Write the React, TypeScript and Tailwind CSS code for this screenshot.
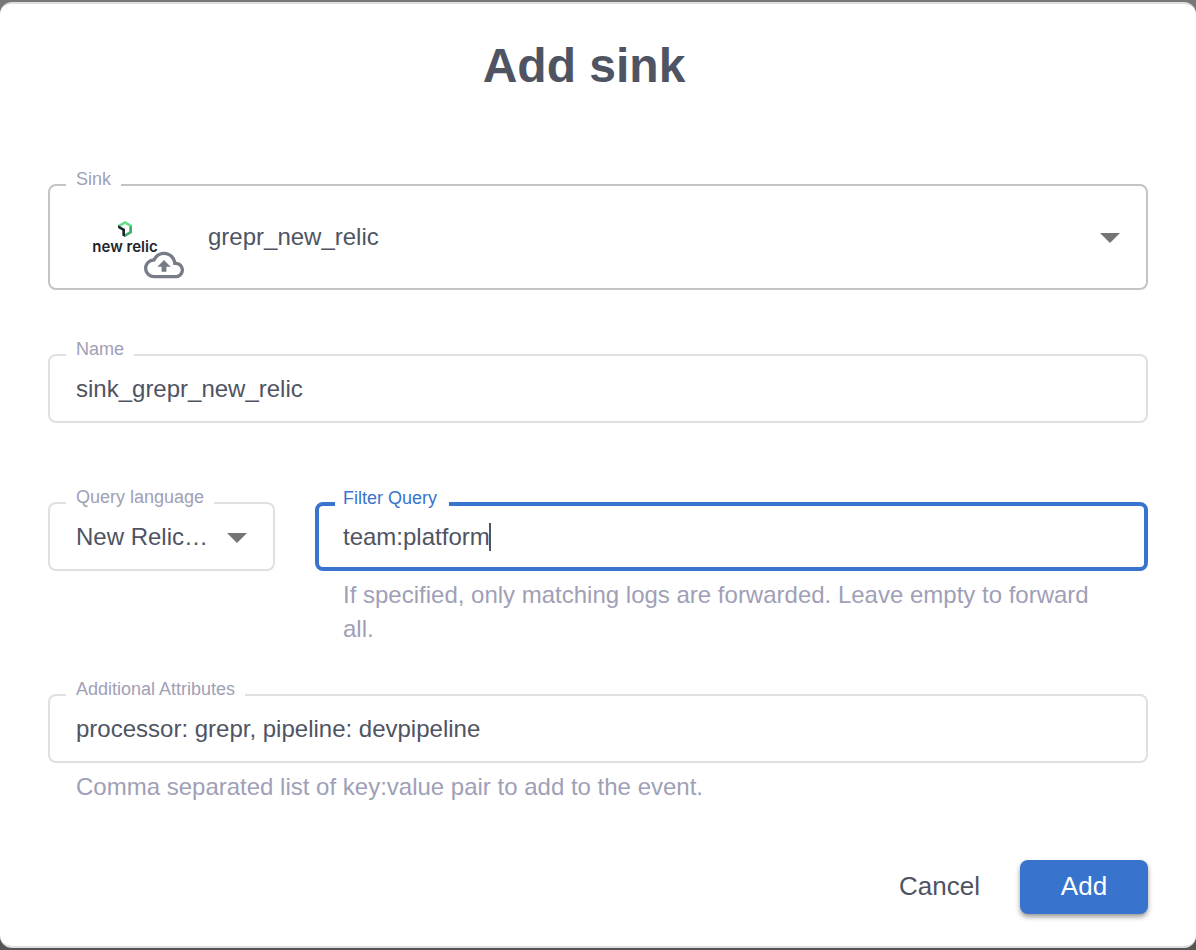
import { useState } from "react";
import type { ReactNode } from "react";
import clsx from "clsx";

type FieldProps = {
  id: string;
  label: string;
  tone?: "default" | "strong" | "focused";
  children: ReactNode;
};

// Outlined box with the label sitting in the notch of the top border
function Field({ id, label, tone = "default", children }: FieldProps) {
  return (
    <fieldset
      className={clsx(
        "min-w-0 rounded-lg",
        tone === "default" && "border-2 border-[#e0e0e0]",
        tone === "strong" && "border-2 border-[#c4c4c4]",
        tone === "focused" && "border-4 border-[#3873cd]"
      )}
    >
      <legend
        className={clsx(
          "ml-4 flex items-end text-lg",
          tone === "focused"
            ? "h-1 pl-2 pr-3 leading-4 text-[#3873cd]"
            : "h-0.5 px-2.5 leading-[14px] text-[#9fa0b6]"
        )}
      >
        <label htmlFor={id}>{label}</label>
      </legend>
      {children}
    </fieldset>
  );
}

function Arrow() {
  return (
    <svg viewBox="0 0 24 24" className="pointer-events-none absolute right-3 size-12 fill-[#757575]">
      <path d="M7 10l5 5 5-5z" />
    </svg>
  );
}

function NewRelicLogo() {
  return (
    <div className="pointer-events-none absolute left-[41px] flex w-17 flex-col items-center pt-1">
      <svg viewBox="0 0 832.8 959.8" className="h-4 w-3.5">
        <polygon fill="#3fae6a" points="672.6,332.3 672.6,627.4 416.4,775.2 416.4,959.8 832.8,719.9 832.8,239.9" />
        <polygon fill="#62df8a" points="416.4,184.6 672.6,332.3 832.8,239.9 416.4,0 0,239.9 160.1,332.3" />
        <polygon fill="#1d252c" points="256.2,572.3 256.2,867.6 416.4,959.8 416.4,479.9 0,239.9 0,424.5" />
      </svg>
      <span className="whitespace-nowrap font-[family-name:Inter,sans-serif] text-[15px]/5 font-semibold text-[#1d252c]">
        new relic
      </span>
      <svg viewBox="0 0 24 24" className="absolute left-[53px] top-7 size-10 fill-[#777b87]">
        <path d="M19.35 10.04C18.67 6.59 15.64 4 12 4 9.11 4 6.6 5.64 5.35 8.04 2.34 8.36 0 10.91 0 14c0 3.31 2.69 6 6 6h13c2.76 0 5-2.24 5-5 0-2.64-2.05-4.78-4.65-4.96zM19 18H6c-2.21 0-4-1.79-4-4 0-2.05 1.53-3.76 3.56-3.97l1.07-.11.5-.95C8.08 7.14 9.94 6 12 6c2.62 0 4.88 1.86 5.39 4.43l.3 1.5 1.53.11c1.56.1 2.78 1.41 2.78 2.96 0 1.65-1.35 3-3 3zM8 13h2.55v3h2.9v-3H16l-4-4z" />
      </svg>
    </div>
  );
}

export default function App() {
  const [name, setName] = useState("sink_grepr_new_relic");
  const [query, setQuery] = useState("team:platform");
  const [attributes, setAttributes] = useState("processor: grepr, pipeline: devpipeline");

  return (
    <div className="min-h-screen bg-gradient-to-b from-[#777777] to-[#555555] py-0.5 font-['Liberation_Sans',Arial,sans-serif] text-[#4f5463]">
      <form
        role="dialog"
        aria-labelledby="dialog-title"
        onSubmit={(e) => e.preventDefault()}
        className="rounded-xl border-y-2 border-[#dedede] bg-white px-12 pb-8 pt-8"
      >
        <h1 id="dialog-title" className="mr-7 text-center text-5xl/15 font-bold">
          Add sink
        </h1>

        <div className="mt-22">
          <Field id="sink" label="Sink" tone="strong">
            <div className="relative flex items-center">
              <NewRelicLogo />
              <select
                id="sink"
                className="h-[102px] w-full appearance-none bg-transparent pl-[158px] pr-14 text-2xl outline-none"
              >
                <option>grepr_new_relic</option>
              </select>
              <Arrow />
            </div>
          </Field>
        </div>

        <div className="mt-16">
          <Field id="name" label="Name">
            <input
              id="name"
              value={name}
              onChange={(e) => setName(e.target.value)}
              className="block h-[65px] w-full px-[26px] text-2xl outline-none"
            />
          </Field>
        </div>

        <div className="mt-[79px] flex items-start gap-10">
          <div className="w-[227px] shrink-0">
            <Field id="language" label="Query language">
              <div className="relative flex items-center">
                <select
                  id="language"
                  className="h-[65px] w-full appearance-none bg-transparent pl-[26px] pr-14 text-2xl outline-none"
                >
                  <option>New Relic…</option>
                </select>
                <Arrow />
              </div>
            </Field>
          </div>

          <div className="flex-1">
            <Field id="query" label="Filter Query" tone="focused">
              <div className="flex h-[61px] items-center px-6">
                <input
                  id="query"
                  value={query}
                  onChange={(e) => setQuery(e.target.value)}
                  className="max-w-full text-2xl caret-transparent outline-none field-sizing-content"
                />
                <span className="-ml-px h-7 w-0.5 bg-[#4f5463]" />
              </div>
            </Field>
            <p className="mt-[7px] px-7 text-2xl/[34px] text-[#9fa0b6]">
              If specified, only matching logs are forwarded. Leave empty to forward all.
            </p>
          </div>
        </div>

        <div className="mt-12">
          <Field id="attributes" label="Additional Attributes">
            <input
              id="attributes"
              value={attributes}
              onChange={(e) => setAttributes(e.target.value)}
              className="block h-[65px] w-full px-[26px] text-2xl outline-none"
            />
          </Field>
          <p className="mt-[7px] px-7 text-2xl/[34px] text-[#9fa0b6]">
            Comma separated list of key:value pair to add to the event.
          </p>
        </div>

        <div className="mt-14 flex items-center justify-end gap-6">
          <button type="button" className="h-[54px] px-4 pb-0.5 text-[26px]">
            Cancel
          </button>
          <button
            type="submit"
            className="h-[54px] min-w-32 rounded-lg bg-[#3873cd] px-10 pb-0.5 text-[26px] text-white shadow-[0_3px_5px_rgba(0,0,0,0.4)]"
          >
            Add
          </button>
        </div>
      </form>
    </div>
  );
}
